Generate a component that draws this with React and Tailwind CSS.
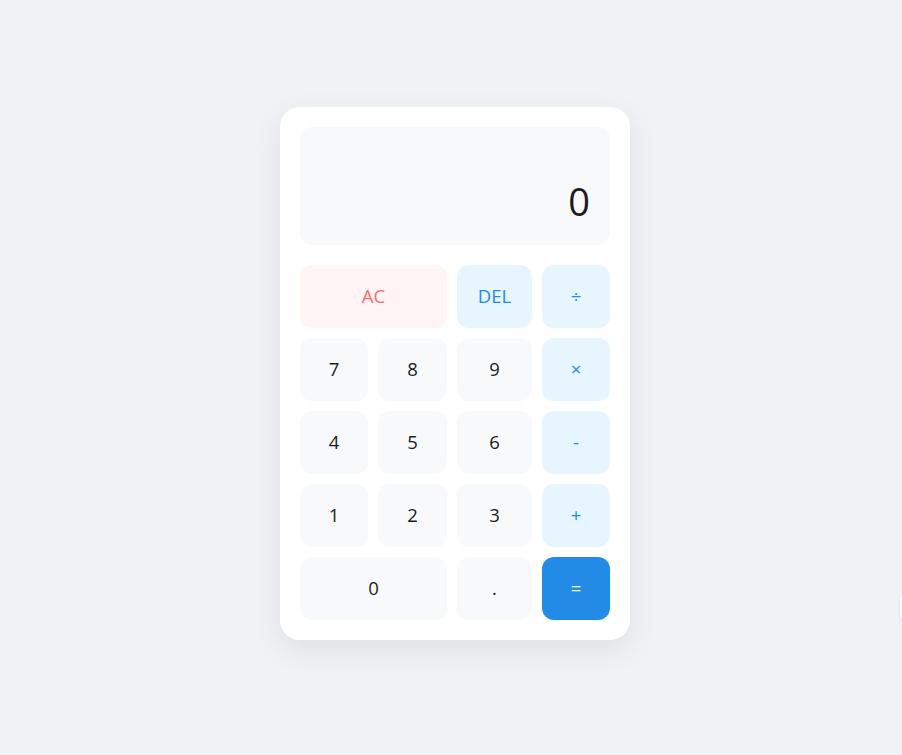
import { useState } from "react"

const keys = [
  { label: "AC", kind: "clear", span: true },
  { label: "DEL", kind: "op" },
  { label: "÷", kind: "op" },
  { label: "7" },
  { label: "8" },
  { label: "9" },
  { label: "×", kind: "op" },
  { label: "4" },
  { label: "5" },
  { label: "6" },
  { label: "-", kind: "op" },
  { label: "1" },
  { label: "2" },
  { label: "3" },
  { label: "+", kind: "op" },
  { label: "0", span: true },
  { label: "." },
  { label: "=", kind: "equals" },
]

const styles = {
  num: "bg-[#f8f9fa] text-[#1a1d21]",
  op: "bg-[#e7f5ff] text-[#228be6]",
  clear: "bg-[#fff5f5] text-[#ff6b6b]",
  equals: "bg-[#228be6] text-white",
}

const App = () => {
  const [display, setDisplay] = useState("0")

  const press = (label) => {
    if (label === "AC") return setDisplay("0")
    if (label === "DEL") return setDisplay((d) => (d.length > 1 ? d.slice(0, -1) : "0"))
    if (label === "=") {
      try {
        const expr = display.replace(/×/g, "*").replace(/÷/g, "/")
        // eslint-disable-next-line no-new-func
        const result = Function(`return (${expr})`)()
        setDisplay(String(result))
      } catch {
        setDisplay("Error")
      }
      return
    }
    setDisplay((d) => (d === "0" && label !== "." ? label : d + label))
  }

  return (
    <div
      className="flex min-h-screen items-center justify-center bg-[#f0f2f5] pb-2 pl-2"
      style={{ fontFamily: '"Open Sans", "Noto Sans", sans-serif' }}
    >
      <div className="w-[350px] rounded-[20px] bg-white p-5 shadow-[0_10px_30px_rgba(0,0,0,0.08)]">
        <div className="mb-5 flex h-[118px] items-end justify-end rounded-xl bg-[#f8f9fa] px-5 pb-[15px]">
          <span className="text-[38px] leading-normal text-[#1a1d21]">{display}</span>
        </div>
        <div className="grid grid-cols-[68px_69px_75px_68px] auto-rows-[62.5px] gap-x-[10px] gap-y-[10.5px]">
          {keys.map((k) => (
            <button
              key={k.label}
              onClick={() => press(k.label)}
              className={`flex items-center justify-center rounded-xl text-[18.5px] leading-none ${
                styles[k.kind || "num"]
              } ${k.span ? "col-span-2" : ""}`}
            >
              {k.label}
            </button>
          ))}
        </div>
      </div>
      <div className="fixed left-[900px] top-[593px] h-[28px] w-[40px] rounded-md bg-white shadow-sm" />
    </div>
  )
}

export default App
